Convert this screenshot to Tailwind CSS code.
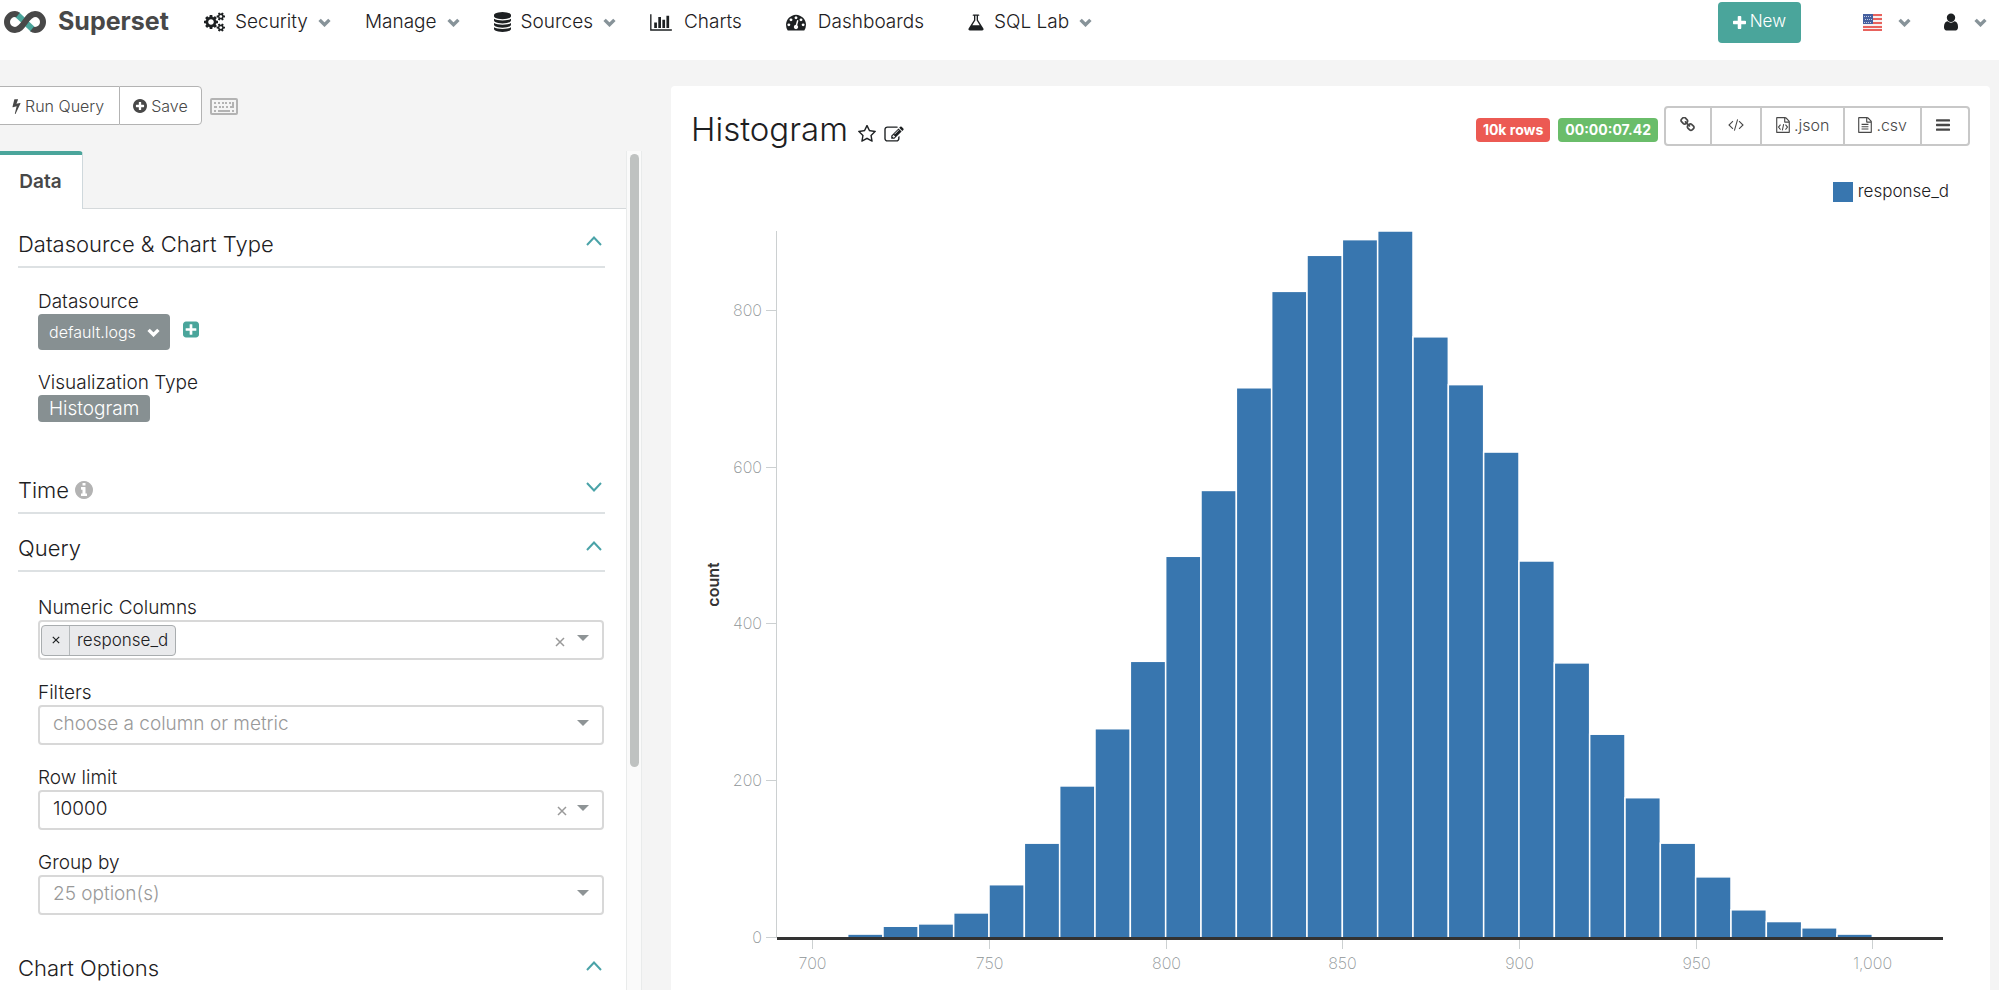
<!DOCTYPE html>
<html lang="en">
<head>
<meta charset="utf-8">
<meta name="viewport" content="width=device-width, initial-scale=1">
<title>Superset - Histogram</title>
<script src="https://cdn.jsdelivr.net/npm/@tailwindcss/browser@4"></script>
</head>
<body class="flex h-screen flex-col overflow-hidden bg-[#f4f4f4] font-[Inter,sans-serif] text-[19px] font-light text-[#1d2022]">

<!-- Icon sprite -->
<svg class="hidden" aria-hidden="true">
  <symbol id="cogs" viewBox="0 0 1920 1792"><path d="M896 896q0-106-75-181t-181-75-181 75-75 181 75 181 181 75 181-75 75-181zm768 512q0-52-38-90t-90-38-90 38-38 90q0 53 37.5 90.5t90.5 37.5 90.5-37.5 37.5-90.5zm0-1024q0-52-38-90t-90-38-90 38-38 90q0 53 37.5 90.5t90.5 37.5 90.5-37.5 37.5-90.5zm-384 421v185q0 10-7 19.5t-16 10.5l-155 24q-11 35-32 76 34 48 90 115 7 10 7 20 0 12-7 19-23 30-82.5 89.5t-78.5 59.5q-11 0-21-7l-115-90q-37 19-77 31-11 108-23 155-7 24-30 24h-186q-11 0-20-7.5t-10-17.5l-23-153q-34-10-75-31l-118 89q-7 7-20 7-11 0-21-8-144-133-144-160 0-9 7-19 10-14 41-53t47-61q-23-44-35-82l-152-24q-10-1-17-9.5t-7-19.5v-185q0-10 7-19.5t16-10.5l155-24q11-35 32-76-34-48-90-115-7-11-7-20 0-12 7-20 22-30 82-89t79-59q11 0 21 7l115 90q34-18 77-32 11-108 23-154 7-24 30-24h186q11 0 20 7.5t10 17.5l23 153q34 10 75 31l118-89q8-7 20-7 11 0 21 8 144 133 144 160 0 9-7 19-12 16-42 54t-45 60q23 48 34 82l152 23q10 2 17 10.5t7 19.5zm640 533v140q0 16-149 31-12 27-30 52 51 113 51 138 0 4-4 7-122 71-124 71-8 0-46-47t-52-68q-20 2-30 2t-30-2q-14 21-52 68t-46 47q-2 0-124-71-4-3-4-7 0-25 51-138-18-25-30-52-149-15-149-31v-140q0-16 149-31 13-29 30-52-51-113-51-138 0-4 4-7 4-2 35-20t59-34 30-16q8 0 46 46.5t52 67.5q20-2 30-2t30 2q51-71 92-112l6-2q4 0 124 70 4 3 4 7 0 25-51 138 17 23 30 52 149 15 149 31zm0-1024v140q0 16-149 31-12 27-30 52 51 113 51 138 0 4-4 7-122 71-124 71-8 0-46-47t-52-68q-20 2-30 2t-30-2q-14 21-52 68t-46 47q-2 0-124-71-4-3-4-7 0-25 51-138-18-25-30-52-149-15-149-31v-140q0-16 149-31 13-29 30-52-51-113-51-138 0-4 4-7 4-2 35-20t59-34 30-16q8 0 46 46.5t52 67.5q20-2 30-2t30 2q51-71 92-112l6-2q4 0 124 70 4 3 4 7 0 25-51 138 17 23 30 52 149 15 149 31z"/></symbol>
  <symbol id="database" viewBox="128 0 1536 1792"><path d="M896 768q237 0 443-43t325-127v170q0 69-103 128t-280 93.500-385 34.500-385-34.500-280-93.500-103-128v-170q119 84 325 127t443 43zm0 768q237 0 443-43t325-127v170q0 69-103 128t-280 93.500-385 34.500-385-34.500-280-93.500-103-128v-170q119 84 325 127t443 43zm0-384q237 0 443-43t325-127v170q0 69-103 128t-280 93.500-385 34.500-385-34.500-280-93.500-103-128v-170q119 84 325 127t443 43zm0-1152q208 0 385 34.500t280 93.500 103 128v128q0 69-103 128t-280 93.500-385 34.500-385-34.500-280-93.500-103-128v-128q0-69 103-128t280-93.500 385-34.500z"/></symbol>
  <symbol id="bar-chart" viewBox="0 0 2048 1792"><path d="M640 896v512h-256v-512h256zm384-512v1024h-256v-1024h256zm1024 1152v128h-2048v-1536h128v1408h1920zm-640-896v768h-256v-768h256zm384-384v1152h-256v-1152h256z"/></symbol>
  <symbol id="dashboard" viewBox="0 0 1792 1792"><path d="M384 1152q0-53-37.500-90.500t-90.500-37.500-90.500 37.500-37.500 90.500 37.500 90.500 90.500 37.500 90.500-37.500 37.500-90.500zm192-448q0-53-37.500-90.500t-90.500-37.500-90.500 37.500-37.500 90.500 37.500 90.500 90.500 37.500 90.500-37.500 37.500-90.500zm428 481l101-382q6-26-7.500-48.500t-38.500-29.500-48 6.500-30 39.500l-101 382q-60 5-107 43.500t-63 98.500q-20 77 20 146t117 89 146-20 89-117q16-60-6-117t-72-91zm660-33q0-53-37.500-90.500t-90.500-37.500-90.500 37.500-37.500 90.500 37.500 90.500 90.500 37.500 90.500-37.500 37.500-90.500zm-640-640q0-53-37.500-90.500t-90.500-37.500-90.500 37.500-37.500 90.500 37.500 90.500 90.500 37.500 90.500-37.500 37.500-90.500zm448 192q0-53-37.500-90.500t-90.500-37.500-90.500 37.500-37.500 90.500 37.500 90.500 90.500 37.500 90.500-37.500 37.500-90.500zm320 448q0 261-141 483-19 29-54 29h-1402q-35 0-54-29-141-221-141-483 0-182 71-348t191-286 286-191 348-71 348 71 286 191 191 286 71 348z"/></symbol>
  <symbol id="flask" viewBox="128 0 1536 1792"><path d="M1591 1448q56 89 21.500 152.500t-140.500 63.500h-1152q-106 0-140.500-63.500t21.500-152.500l503-793v-399h-64q-26 0-45-19t-19-45 19-45 45-19h512q26 0 45 19t19 45-19 45-45 19h-64v399zm-779-725l-272 429h712l-272-429-20-31v-436h-128v436z"/></symbol>
  <symbol id="user" viewBox="256 0 1280 1792"><path d="M1536 1399q0 109-62.500 187t-150.500 78h-854q-88 0-150.500-78t-62.500-187q0-85 8.500-160.500t31.500-152 58.500-131 94-89 134.500-34.500q131 128 313 128t313-128q76 0 134.500 34.500t94 89 58.500 131 31.500 152 8.500 160.500zm-256-887q0 159-112.500 271.500t-271.500 112.500-271.500-112.500-112.500-271.500 112.500-271.500 271.500-112.500 271.500 112.500 112.500 271.500z"/></symbol>
  <symbol id="plus" viewBox="192 128 1408 1408"><path d="M1600 736v192q0 40-28 68t-68 28h-416v416q0 40-28 68t-68 28h-192q-40 0-68-28t-28-68v-416h-416q-40 0-68-28t-28-68v-192q0-40 28-68t68-28h416v-416q0-40 28-68t68-28h192q40 0 68 28t28 68v416h416q40 0 68 28t28 68z"/></symbol>
  <symbol id="plus-circle" viewBox="128 128 1536 1536"><path d="M1344 960v-128q0-26-19-45t-45-19h-256v-256q0-26-19-45t-45-19h-128q-26 0-45 19t-19 45v256h-256q-26 0-45 19t-19 45v128q0 26 19 45t45 19h256v256q0 26 19 45t45 19h128q26 0 45-19t19-45v-256h256q26 0 45-19t19-45zm320-64q0 209-103 385.500t-279.500 279.500-385.500 103-385.500-103-279.500-279.500-103-385.500 103-385.500 279.500-279.500 385.500-103 385.500 103 279.500 279.500 103 385.500z"/></symbol>
  <symbol id="plus-square" viewBox="128 128 1536 1536"><path d="M1408 960v-128q0-26-19-45t-45-19h-320v-320q0-26-19-45t-45-19h-128q-26 0-45 19t-19 45v320h-320q-26 0-45 19t-19 45v128q0 26 19 45t45 19h320v320q0 26 19 45t45 19h128q26 0 45-19t19-45v-320h320q26 0 45-19t19-45zm256-544v960q0 119-84.500 203.500t-203.500 84.500h-960q-119 0-203.500-84.500t-84.500-203.500v-960q0-119 84.500-203.500t203.500-84.500h960q119 0 203.500 84.500t84.500 203.500z"/></symbol>
  <symbol id="bolt" viewBox="448 0 896 1792"><path d="M1333 566q18 20 7 44l-540 1157q-13 25-42 25-4 0-14-2-17-5-25.500-19t-4.500-30l197-808-406 101q-4 1-12 1-18 0-31-11-18-15-13-39l201-825q4-14 16-23t28-9h328q19 0 32 12.500t13 29.500q0 8-5 18l-171 463 396-98q8-2 12-2 19 0 34 15z"/></symbol>
  <symbol id="bars" viewBox="128 256 1536 1280"><path d="M192 256h1408q64 0 64 64v128q0 64-64 64h-1408q-64 0-64-64v-128q0-64 64-64zM192 768h1408q64 0 64 64v128q0 64-64 64h-1408q-64 0-64-64v-128q0-64 64-64zM192 1280h1408q64 0 64 64v128q0 64-64 64h-1408q-64 0-64-64v-128q0-64 64-64z"/></symbol>
  <symbol id="info" viewBox="128 128 1536 1536"><path d="M1152 1376v-160q0-14-9-23t-23-9h-96v-512q0-14-9-23t-23-9h-320q-14 0-23 9t-9 23v160q0 14 9 23t23 9h96v320h-96q-14 0-23 9t-9 23v160q0 14 9 23t23 9h448q14 0 23-9t9-23zm-128-896v-160q0-14-9-23t-23-9h-192q-14 0-23 9t-9 23v160q0 14 9 23t23 9h192q14 0 23-9t9-23zm640 416q0 209-103 385.500t-279.500 279.500-385.500 103-385.500-103-279.500-279.500-103-385.500 103-385.500 279.500-279.500 385.500-103 385.500 103 279.500 279.500 103 385.500z"/></symbol>
  <symbol id="star" viewBox="64 64 1664 1664"><path d="M1201 1004l306-297-422-62-189-382-189 382-422 62 306 297-73 421 378-199 377 199zm527-357q0 22-26 48l-363 354 86 500q1 7 1 20 0 50-41 50-19 0-40-12l-449-236-449 236q-22 12-40 12-21 0-31.500-14.500t-10.500-35.500q0-6 2-20l86-500-364-354q-25-27-25-48 0-37 56-46l502-73 225-455q19-41 49-41t49 41l225 455 502 73q56 9 56 46z"/></symbol>
  <symbol id="edit" viewBox="0 0 1792 1664"><path d="M888 1184l116-116-152-152-116 116v56h96v96h56zm440-720q-16-16-33 1l-350 350q-17 17-1 33t33-1l350-350q17-17 1-33zm80 594v190q0 119-84.500 203.500t-203.500 84.500h-832q-119 0-203.500-84.500t-84.500-203.500v-832q0-119 84.500-203.500t203.500-84.500h832q63 0 117 25 15 7 18 23 3 17-9 29l-49 49q-14 14-32 8-23-6-45-6h-832q-66 0-113 47t-47 113v832q0 66 47 113t113 47h832q66 0 113-47t47-113v-126q0-13 9-22l64-64q15-15 35-7t20 29zm-96-738l288 288-672 672h-288v-288zm444 132l-92 92-288-288 92-92q28-28 68-28t68 28l152 152q28 28 28 68t-28 68z"/></symbol>
  <symbol id="link" viewBox="64 64 1664 1664"><path d="M1520 1216q0-40-28-68l-208-208q-28-28-68-28-42 0-72 32 3 3 19 18.500t21.500 21.500 15 19 13 25.500 3.500 27.500q0 40-28 68t-68 28q-15 0-27.500-3.500t-25.500-13-19-15-21.500-21.500-18.500-19q-33 31-33 73 0 40 28 68l206 207q27 27 68 27 40 0 68-26l147-146q28-28 28-67zm-703-705q0-40-28-68l-206-207q-28-28-68-28-39 0-68 27l-147 146q-28 28-28 67 0 40 28 68l208 208q27 27 68 27 42 0 72-31-3-3-19-18.500t-21.500-21.500-15-19-13-25.500-3.500-27.500q0-40 28-68t68-28q15 0 27.500 3.500t25.500 13 19 15 21.500 21.500 18.500 19q33-31 33-73zm895 705q0 120-85 203l-147 146q-83 83-203 83-121 0-204-85l-206-207q-83-83-83-203 0-123 88-209l-88-88q-86 88-208 88-120 0-204-84l-208-208q-84-84-84-204t85-203l147-146q83-83 203-83 121 0 204 85l206 207q83 83 83 203 0 123-88 209l88 88q86-88 208-88 120 0 204 84l208 208q84 84 84 204z"/></symbol>
  <symbol id="code" viewBox="0 256 1920 1408"><path d="M617 1399l-50 50q-10 10-23 10t-23-10l-466-466q-10-10-10-23t10-23l466-466q10-10 23-10t23 10l50 50q10 10 10 23t-10 23l-393 393 393 393q10 10 10 23t-10 23zm591-1067l-373 1291q-4 13-15.500 19.500t-23.500 2.500l-62-17q-13-4-19.500-15.500t-2.500-24.500l373-1291q4-13 15.500-19.500t23.500-2.500l62 17q13 4 19.500 15.500t2.500 24.500zm657 651l-466 466q-10 10-23 10t-23-10l-50-50q-10-10-10-23t10-23l393-393-393-393q-10-10-10-23t10-23l50-50q10-10 23-10t23 10l466 466q10 10 10 23t-10 23z"/></symbol>
  <symbol id="file-code" viewBox="128 0 1536 1792"><path d="M1596 380q28 28 48 76t20 88v1152q0 40-28 68t-68 28h-1344q-40 0-68-28t-28-68v-1600q0-40 28-68t68-28h896q40 0 88 20t76 48zm-444-244v376h376q-10-29-22-41l-313-313q-12-12-41-22zm384 1528v-1024h-416q-40 0-68-28t-28-68v-416h-768v1536h1280z"/><path d="M620 850L390 1130L620 1410M1172 850L1402 1130L1172 1410M970 790L822 1500" fill="none" stroke="currentColor" stroke-width="120"/></symbol>
  <symbol id="file-text" viewBox="128 0 1536 1792"><path d="M1596 380q28 28 48 76t20 88v1152q0 40-28 68t-68 28h-1344q-40 0-68-28t-28-68v-1600q0-40 28-68t68-28h896q40 0 88 20t76 48zm-444-244v376h376q-10-29-22-41l-313-313q-12-12-41-22zm384 1528v-1024h-416q-40 0-68-28t-28-68v-416h-768v1536h1280zM512 768h768v128h-768zM512 1024h768v128h-768zM512 1280h768v128h-768z"/></symbol>
  <symbol id="keyboard" viewBox="0 0 28 17"><rect x="1" y="1" width="26" height="15" rx="1" fill="none" stroke="currentColor" stroke-width="2"/><path d="M4 4h2v2H4zM8 4h2v2H8zM12 4h2v2h-2zM15 4h2v2h-2zM19 4h2v2h-2zM22 4h2v6h-4V8h2zM4 8h3v2H4zM9 8h2v2H9zM12 8h2v2h-2zM16 8h2v2h-2zM4 12h2v2H4zM8 12h12v2H8zM22 12h2v2h-2z"/></symbol>
  <symbol id="angle" viewBox="0 0 13 9"><path d="M1.600 1.900L6.500 6.700L11.400 1.900" fill="none" stroke="currentColor" stroke-width="3.400"/></symbol>
  <symbol id="up" viewBox="0 0 16 10"><path d="M1 9L8 1.500L15 9" fill="none" stroke="currentColor" stroke-width="2"/></symbol>
  <symbol id="down" viewBox="0 0 16 10"><path d="M1 1L8 8.500L15 1" fill="none" stroke="currentColor" stroke-width="2"/></symbol>
  <symbol id="caret" viewBox="0 0 12 6"><path d="M0 0h12L6 6z"/></symbol>
  <symbol id="cross" viewBox="0 0 10 10"><path d="M1 1L9 9M9 1L1 9" fill="none" stroke="currentColor" stroke-width="1.500"/></symbol>
</svg>

<header class="h-[60px] shrink-0 bg-white">
  <div class="flex h-[44px] items-center pr-3 pl-1">
    <a href="#" class="flex w-[200px] items-center gap-3 text-[25px] font-bold text-[#484848]">
      <svg class="h-[24px] w-[42px]" viewBox="0 0 42 24" fill="none" stroke-width="6">
        <path d="M13 4.500L29 19.500" stroke="#4aa59b"/>
        <path d="M14 5C13 4.200 12 4 11 4A8 8 0 0 0 11 20C15 20 17.500 17 21 12S27 4 31 4A8 8 0 0 1 31 20C30 20 29 19.800 28 19" stroke="#484848"/>
      </svg>
      Superset
    </a>
    <nav class="flex items-center gap-[34px]" aria-label="Main">
      <button class="flex items-center gap-[10px]"><svg class="h-[20px] w-[21px] fill-current"><use href="#cogs"/></svg>Security<svg class="h-[9px] w-[13px] text-[#879399]"><use href="#angle"/></svg></button>
      <button class="flex items-center gap-[10px]">Manage<svg class="h-[9px] w-[13px] text-[#879399]"><use href="#angle"/></svg></button>
      <button class="flex items-center gap-[10px]"><svg class="h-[20px] w-[17px] fill-current"><use href="#database"/></svg>Sources<svg class="h-[9px] w-[13px] text-[#879399]"><use href="#angle"/></svg></button>
      <a href="#" class="flex items-center gap-3 pr-[10px]"><svg class="h-[19px] w-[22px] fill-current"><use href="#bar-chart"/></svg>Charts</a>
      <a href="#" class="flex items-center gap-3 pr-[10px]"><svg class="h-[20px] w-[20px] fill-current"><use href="#dashboard"/></svg>Dashboards</a>
      <button class="flex items-center gap-[10px]"><svg class="h-[19px] w-[16px] fill-current"><use href="#flask"/></svg>SQL Lab<svg class="h-[9px] w-[13px] text-[#879399]"><use href="#angle"/></svg></button>
    </nav>
    <div class="ml-auto flex items-center">
      <button class="flex h-[41px] items-center gap-1 rounded bg-[#4aa59b] px-[15px] text-[17px] text-white"><svg class="h-[13px] w-[13px] fill-current"><use href="#plus"/></svg>New</button>
      <button class="ml-[62px] flex items-center gap-4" aria-label="Language">
        <svg class="h-[17px] w-[19px]" viewBox="0 0 19 17"><path fill="#f5f0f0" d="M0 0h19v17H0z"/><path fill="#e8625d" d="M0 0h19v2H0zM0 4h19v2H0zM0 8h19v2H0zM0 12h19v2H0zM0 15h19v2H0z"/><path fill="#45609f" d="M0 0h10v10H0z"/><path stroke="#c3cce0" stroke-dasharray="1 1" d="M1 2.500h8M2 5.500h8M1 8.500h8"/></svg>
        <svg class="h-[9px] w-[13px] text-[#879399]"><use href="#angle"/></svg>
      </button>
      <button class="ml-[33px] flex items-center gap-4" aria-label="Account">
        <svg class="h-[20px] w-[14px] fill-current"><use href="#user"/></svg>
        <svg class="h-[9px] w-[13px] text-[#879399]"><use href="#angle"/></svg>
      </button>
    </div>
  </div>
</header>

<main class="flex min-h-0 flex-1 gap-[29px] pt-[26px] pr-[9px]">
  <section class="flex w-[642px] shrink-0 flex-col" aria-label="Controls">
    <div class="flex h-[39px] items-center text-[16px] text-[#484848]">
      <button class="flex h-full items-center gap-1 border-y border-[#b3b3b3] bg-white pr-[15px] pl-3"><svg class="h-[16px] w-[9px] fill-current"><use href="#bolt"/></svg>Run Query</button>
      <button class="flex h-full items-center gap-1 rounded-r-sm border border-[#b3b3b3] bg-white px-[13px]"><svg class="h-[14px] w-[14px] fill-current"><use href="#plus-circle"/></svg>Save</button>
      <button class="mt-px ml-2 text-[#b3b3b3]" aria-label="Keyboard shortcuts"><svg class="h-[17px] w-[28px] fill-current"><use href="#keyboard"/></svg></button>
    </div>

    <div class="mt-[26px] flex min-h-0 flex-1">
      <div class="flex min-w-0 flex-1 flex-col">
        <div class="flex h-[58px] shrink-0" role="tablist">
          <button role="tab" aria-selected="true" class="h-full w-[83px] rounded-tr-sm border-t-4 border-r border-t-[#4aa59b] border-r-[#cfd8dc] bg-white pr-[1px] text-center font-semibold text-[#484848]">Data</button>
          <div class="flex-1 border-b border-[#d5d9db]"></div>
        </div>
        <div class="min-h-0 flex-1 overflow-hidden bg-white pt-px pr-[21px] pl-[18px]">
          <section>
            <h2 class="flex h-[58px] items-start justify-between border-b-2 border-[#dde1e3] pt-[20px] text-[22px] leading-[28px]">Datasource &amp; Chart Type<button class="mt-[6px] mr-[3px] flex text-[#4aa3a8]" aria-label="Collapse"><svg class="h-[10px] w-[16px]"><use href="#up"/></svg></button></h2>
            <div class="h-[188px] px-5 pt-[22px] leading-[24px]">
              <div>Datasource</div>
              <div class="flex items-start gap-[13px]">
                <button class="flex h-[36px] items-center gap-[11px] rounded-sm bg-[#879092] px-[10px] pl-[11px] text-[16px] text-white">default.logs<svg class="h-[9px] w-[13px]"><use href="#angle"/></svg></button>
                <button class="mt-[7px] text-[#4aa59b]" aria-label="Add"><svg class="h-[17px] w-[16px] fill-current"><use href="#plus-square"/></svg></button>
              </div>
              <div class="mt-[21px]">Visualization Type</div>
              <button class="flex h-[27px] items-center rounded-sm bg-[#879092] px-[11px] text-white">Histogram</button>
            </div>
          </section>
          <section>
            <h2 class="flex h-[58px] items-start justify-between border-b-2 border-[#dde1e3] pt-[20px] text-[22px] leading-[28px]"><span class="flex items-center gap-[6px]">Time <svg class="h-[18px] w-[18px] fill-[#b3b3b3]"><use href="#info"/></svg></span><button class="mt-[6px] mr-[3px] flex text-[#4aa3a8]" aria-label="Expand"><svg class="h-[10px] w-[16px]"><use href="#down"/></svg></button></h2>
          </section>
          <section>
            <h2 class="flex h-[58px] items-start justify-between border-b-2 border-[#dde1e3] pt-[20px] text-[22px] leading-[28px]">Query<button class="mt-[7px] mr-[3px] flex text-[#4aa3a8]" aria-label="Collapse"><svg class="h-[10px] w-[16px]"><use href="#up"/></svg></button></h2>
            <div class="flex flex-col gap-[21px] pt-[24px] pr-px pb-[19px] pl-5 leading-[24px]">
              <div>
                <label for="cols" class="block">Numeric Columns</label>
                <div class="flex h-[40px] items-center rounded border-2 border-[#d8d8d8] bg-white pr-[13px] pl-px">
                  <span class="flex h-[31px] items-stretch rounded-sm border border-[#a9adaf] bg-[#e9eaec] text-[17px]">
                    <button class="flex w-[28px] items-center justify-center border-r border-[#b6babc]" aria-label="Remove response_d"><svg class="h-[8px] w-[8px]"><use href="#cross"/></svg></button>
                    <span class="flex items-center px-[7px]">response_d</span>
                  </span>
                  <input id="cols" class="min-w-0 flex-1 outline-none">
                  <button class="mt-1 mr-3 text-[#999]" aria-label="Clear"><svg class="h-[10px] w-[10px]"><use href="#cross"/></svg></button>
                  <svg class="mb-1 h-[6px] w-[12px] fill-[#8e9496]"><use href="#caret"/></svg>
                </div>
              </div>
              <div>
                <label for="filters" class="block">Filters</label>
                <div class="relative">
                  <select id="filters" class="block h-[40px] w-full appearance-none rounded border-2 border-[#d8d8d8] bg-white pr-10 pb-[2px] pl-[13px] text-[#999]"><option>choose a column or metric</option></select>
                  <svg class="pointer-events-none absolute top-[15px] right-[15px] h-[6px] w-[12px] fill-[#8e9496]"><use href="#caret"/></svg>
                </div>
              </div>
              <div>
                <label for="limit" class="block">Row limit</label>
                <div class="relative">
                  <select id="limit" class="block h-[40px] w-full appearance-none rounded border-2 border-[#d8d8d8] bg-white pr-10 pb-[2px] pl-[13px]"><option>10000</option></select>
                  <button class="absolute top-[16px] right-[37px] text-[#999]" aria-label="Clear row limit"><svg class="h-[10px] w-[10px]"><use href="#cross"/></svg></button>
                  <svg class="pointer-events-none absolute top-[15px] right-[15px] h-[6px] w-[12px] fill-[#8e9496]"><use href="#caret"/></svg>
                </div>
              </div>
              <div>
                <label for="group" class="block">Group by</label>
                <div class="relative">
                  <select id="group" class="block h-[40px] w-full appearance-none rounded border-2 border-[#d8d8d8] bg-white pr-10 pb-[2px] pl-[13px] text-[#999]"><option>25 option(s)</option></select>
                  <svg class="pointer-events-none absolute top-[15px] right-[15px] h-[6px] w-[12px] fill-[#8e9496]"><use href="#caret"/></svg>
                </div>
              </div>
            </div>
          </section>
          <section>
            <h2 class="flex h-[58px] items-start justify-between border-b-2 border-[#dde1e3] pt-[20px] text-[22px] leading-[28px]">Chart Options<button class="mt-[7px] mr-[3px] flex text-[#4aa3a8]" aria-label="Collapse"><svg class="h-[10px] w-[16px]"><use href="#up"/></svg></button></h2>
          </section>
        </div>
      </div>
      <div class="w-[16px] border-x border-[#e9ebeb] bg-[#fafafa] px-[3px] pt-[3px]" aria-hidden="true"><div class="h-11/15 w-[9px] rounded-full bg-[#bfc2c1]"></div></div>
    </div>
  </section>

  <section class="flex min-w-0 flex-1 flex-col rounded-t-sm bg-white px-5 pt-5" aria-label="Chart">
    <div class="flex h-[40px] items-center">
      <div class="mt-2 flex items-center">
        <h1 class="text-[33px]">Histogram</h1>
        <button class="mt-[7px] ml-[10px]" aria-label="Favorite"><svg class="h-[18px] w-[18px] fill-current"><use href="#star"/></svg></button>
        <button class="mt-[7px] ml-2" aria-label="Edit"><svg class="h-[18px] w-[20px] fill-current"><use href="#edit"/></svg></button>
      </div>
      <div class="mt-2 ml-auto flex gap-2 text-[14px] leading-[24px] font-bold text-white">
        <span class="rounded-sm bg-[#ec5a53] px-[7px]">10k rows</span>
        <span class="rounded-sm bg-[#6abd6a] px-[7px]">00:00:07.42</span>
      </div>
      <div class="ml-[6px] flex h-[40px] divide-x-2 divide-[#c8c8c8] rounded-sm border-2 border-[#c8c8c8] text-[16px] text-[#484848]">
        <button class="flex w-[46px] items-center justify-center pb-1" aria-label="Link"><svg class="h-[15px] w-[15px] fill-current"><use href="#link"/></svg></button>
        <button class="flex w-[50px] items-center justify-center pb-[2px]" aria-label="Embed code"><svg class="h-[12px] w-[16px] fill-current"><use href="#code"/></svg></button>
        <a href="#" class="flex items-center gap-1 px-[14px] pb-[2px]"><svg class="h-[16px] w-[14px] fill-current"><use href="#file-code"/></svg>.json</a>
        <a href="#" class="flex items-center gap-1 px-[13px] pb-[2px]"><svg class="h-[16px] w-[14px] fill-current"><use href="#file-text"/></svg>.csv</a>
        <button class="flex w-[46px] items-center justify-center pr-1 pb-[2px]" aria-label="Menu"><svg class="h-[12px] w-[14px] fill-current"><use href="#bars"/></svg></button>
      </div>
    </div>
    <div class="mt-[35px] flex h-[22px] items-center justify-end gap-[5px] pr-[21px] text-[17px]">
      <span class="h-[20px] w-[20px] bg-[#3876af]"></span>response_d
    </div>
    <div id="chart" class="min-h-0 flex-1 overflow-hidden"></div>
  </section>
</main>

<script>
  // Counts per bin of width 10, starting at 710
  const counts = [5, 15, 18, 32, 68, 121, 194, 267, 353, 487, 571, 702, 825, 871, 891, 902, 767, 706, 620, 481, 351, 260, 179, 121, 78, 36, 21, 13, 5];
  const box = document.getElementById('chart');

  function draw() {
    const w = box.clientWidth, h = box.clientHeight;
    if (w < 200 || h < 200) return;
    const left = 86, right = w - 27, top = 28, bottom = h - 52;
    const x = v => left + (v - 690) / 330 * (right - left);
    const y = v => bottom - v / 902 * (bottom - top);
    let s = '';
    counts.forEach((c, i) => {
      const x0 = x(710 + i * 10), x1 = x(720 + i * 10);
      s += `<rect x="${x0}" y="${y(c)}" width="${x1 - x0}" height="${bottom - y(c)}" fill="#3876af" stroke="#fff" stroke-width="1.5"/>`;
    });
    s += `<path d="M${left - 0.5} ${top}V${bottom}" stroke="#ccd0d1"/>`;
    for (let v = 0; v <= 800; v += 200) {
      const t = Math.round(y(v)) - 0.5;
      s += `<path d="M${left - 11} ${t}H${left - 1}" stroke="#ccd0d1"/><text x="${left - 15}" y="${t + 5}" text-anchor="end">${v}</text>`;
    }
    for (let v = 700; v <= 1000; v += 50) {
      const t = Math.round(x(v)) + 0.5;
      s += `<path d="M${t} ${bottom}v11" stroke="#ccd0d1"/><text x="${t}" y="${bottom + 31}" text-anchor="middle">${v.toLocaleString('en-US')}</text>`;
    }
    s += `<path d="M${left} ${bottom + 0.5}H${right}" stroke="#333" stroke-width="3"/>`;
    const mid = (top + bottom) / 2;
    s += `<text transform="translate(28 ${mid}) rotate(-90)" text-anchor="middle" class="fill-[#333] text-[16px] font-semibold">count</text>`;
    box.innerHTML = `<svg width="${w}" height="${h}" class="block fill-[#8e9496] text-[16px] font-extralight" role="img" aria-label="Histogram of response_d">${s}</svg>`;
  }
  new ResizeObserver(draw).observe(box);
</script>
</body>
</html>
